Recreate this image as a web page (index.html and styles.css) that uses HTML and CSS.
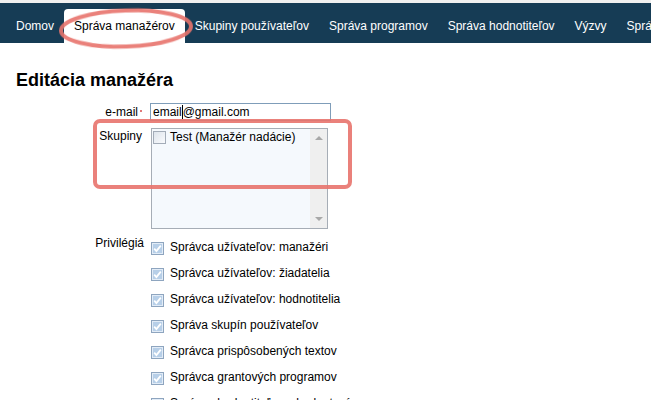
FILE: index.html
```html
<!DOCTYPE html>
<html lang="sk">
<head>
<meta charset="utf-8">
<title>Editácia manažéra</title>
<link rel="stylesheet" href="styles.css">
</head>
<body>
<div class="page">
  <div class="topline"></div>
  <nav class="nav">
    <a class="tab">Domov</a>
    <a class="tab active">Správa manažérov</a>
    <a class="tab">Skupiny používateľov</a>
    <a class="tab">Správa programov</a>
    <a class="tab">Správa hodnotiteľov</a>
    <a class="tab">Výzvy</a>
    <a class="tab">Správa žiadostí</a>
  </nav>

  <h1 class="title">Editácia manažéra</h1>

  <div class="form">
    <div class="label lbl-email">e-mail<span class="req"></span></div>
    <div class="field">
      <div class="input">email<span class="caret"></span>@gmail.com</div>
    </div>

    <div class="label lbl-groups">Skupiny</div>
    <div class="field">
      <div class="listbox">
        <div class="listbox-items">
          <div class="lb-item">
            <svg class="cb" viewBox="0 0 13 13"><defs><linearGradient id="ug" x1="0" y1="0" x2="1" y2="1"><stop offset="0" stop-color="#dce3eb"/><stop offset="1" stop-color="#fbfcfe"/></linearGradient></defs><rect x="0.5" y="0.5" width="12" height="12" fill="url(#ug)" stroke="#a3acb8"/></svg>
            <span>Test (Manažér nadácie)</span>
          </div>
        </div>
        <div class="scrollbar">
          <span class="arrow up"></span>
          <span class="arrow down"></span>
        </div>
      </div>
    </div>

    <div class="label lbl-priv">Privilégiá</div>
    <div class="field">
      <ul class="checks">
        <li><svg class="cb" viewBox="0 0 13 13"><rect x="0.5" y="0.5" width="12" height="12" fill="#e2ecf7" stroke="#8ea5bf"/><rect x="2" y="2" width="9" height="9" fill="#b7cfe8"/><path d="M3.2 6.6 L5.4 9 L9.8 3.6" fill="none" stroke="#fff" stroke-width="1.8"/></svg><span>Správca užívateľov: manažéri</span></li>
        <li><svg class="cb" viewBox="0 0 13 13"><rect x="0.5" y="0.5" width="12" height="12" fill="#e2ecf7" stroke="#8ea5bf"/><rect x="2" y="2" width="9" height="9" fill="#b7cfe8"/><path d="M3.2 6.6 L5.4 9 L9.8 3.6" fill="none" stroke="#fff" stroke-width="1.8"/></svg><span>Správca užívateľov: žiadatelia</span></li>
        <li><svg class="cb" viewBox="0 0 13 13"><rect x="0.5" y="0.5" width="12" height="12" fill="#e2ecf7" stroke="#8ea5bf"/><rect x="2" y="2" width="9" height="9" fill="#b7cfe8"/><path d="M3.2 6.6 L5.4 9 L9.8 3.6" fill="none" stroke="#fff" stroke-width="1.8"/></svg><span>Správca užívateľov: hodnotitelia</span></li>
        <li><svg class="cb" viewBox="0 0 13 13"><rect x="0.5" y="0.5" width="12" height="12" fill="#e2ecf7" stroke="#8ea5bf"/><rect x="2" y="2" width="9" height="9" fill="#b7cfe8"/><path d="M3.2 6.6 L5.4 9 L9.8 3.6" fill="none" stroke="#fff" stroke-width="1.8"/></svg><span>Správa skupín používateľov</span></li>
        <li><svg class="cb" viewBox="0 0 13 13"><rect x="0.5" y="0.5" width="12" height="12" fill="#e2ecf7" stroke="#8ea5bf"/><rect x="2" y="2" width="9" height="9" fill="#b7cfe8"/><path d="M3.2 6.6 L5.4 9 L9.8 3.6" fill="none" stroke="#fff" stroke-width="1.8"/></svg><span>Správca prispôsobených textov</span></li>
        <li><svg class="cb" viewBox="0 0 13 13"><rect x="0.5" y="0.5" width="12" height="12" fill="#e2ecf7" stroke="#8ea5bf"/><rect x="2" y="2" width="9" height="9" fill="#b7cfe8"/><path d="M3.2 6.6 L5.4 9 L9.8 3.6" fill="none" stroke="#fff" stroke-width="1.8"/></svg><span>Správca grantových programov</span></li>
        <li><svg class="cb" viewBox="0 0 13 13"><rect x="0.5" y="0.5" width="12" height="12" fill="#e2ecf7" stroke="#8ea5bf"/><rect x="2" y="2" width="9" height="9" fill="#b7cfe8"/><path d="M3.2 6.6 L5.4 9 L9.8 3.6" fill="none" stroke="#fff" stroke-width="1.8"/></svg><span>Správca hodnotiteľov a hodnotení</span></li>
      </ul>
    </div>
  </div>

  <svg class="annot" width="651" height="400" viewBox="0 0 651 400">
    <defs>
      <filter id="soft" x="-10%" y="-10%" width="120%" height="120%"><feGaussianBlur stdDeviation="0.7"/></filter>
    </defs>
    <ellipse cx="126" cy="28.5" rx="65" ry="18" fill="none" stroke="#e8746d" stroke-opacity="0.9" stroke-width="4" filter="url(#soft)" transform="rotate(-2 126 28.5)"/>
    <rect x="95" y="121" width="255" height="66" rx="5" ry="5" fill="none" stroke="#e8746d" stroke-opacity="0.9" stroke-width="4" filter="url(#soft)"/>
  </svg>
</div>
</body>
</html>
```

FILE: styles.css
```css
* { box-sizing: border-box; }

html, body {
  margin: 0;
  padding: 0;
  background: #ffffff;
}

body {
  font-family: "Liberation Sans", Arial, sans-serif;
  font-size: 12px;
  color: #000;
  overflow: hidden;
}

.page {
  position: relative;
  width: 651px;
  height: 400px;
  overflow: hidden;
}

.topline {
  height: 3px;
  background: #f0f0f0;
}

.nav {
  height: 40px;
  background: #163c55;
  display: flex;
  align-items: flex-end;
  padding-left: 6px;
  white-space: nowrap;
  overflow: hidden;
}

.tab {
  display: block;
  height: 34px;
  line-height: 34px;
  padding: 0 10px;
  color: #ffffff;
  text-decoration: none;
  flex: none;
}

.tab.active {
  background: #ffffff;
  color: #000;
  border-radius: 4px 4px 0 0;
}

.title {
  margin: 27px 0 0 16px;
  font-size: 18px;
  line-height: 21px;
  font-weight: bold;
}

.form {
  margin-top: 12px;
  display: grid;
  grid-template-columns: 144px auto;
  column-gap: 6px;
  row-gap: 7px;
  align-items: start;
}

.label {
  text-align: right;
  line-height: 14px;
}

.lbl-email { padding-top: 2px; padding-right: 2px; }
.lbl-groups { padding-top: 1px; padding-right: 2px; }
.lbl-priv { padding-top: 0; }

.req {
  display: inline-block;
  width: 2px;
  height: 2px;
  background: #e07878;
  margin-left: 2px;
  vertical-align: 4px;
}

.input {
  width: 181px;
  height: 18px;
  border: 1px solid #7f9db9;
  padding: 1px 2px;
  line-height: 14px;
  white-space: nowrap;
  background: #fff;
}

.caret {
  display: inline-block;
  width: 0;
  height: 14px;
  border-left: 1px solid #000;
  vertical-align: top;
}

.listbox {
  margin-left: 1px;
  width: 177px;
  height: 101px;
  border: 1px solid #a6adb6;
  background: #f5f9fd;
  display: flex;
}

.listbox-items {
  flex: 1;
  padding: 1px 0 0 1px;
}

.lb-item {
  display: flex;
  align-items: flex-start;
  gap: 4px;
  line-height: 14px;
}

.lb-item span { padding-top: 0; }

.scrollbar {
  width: 17px;
  background: #efefef;
  display: flex;
  flex-direction: column;
  justify-content: space-between;
  align-items: center;
  padding: 7px 0 7px;
}

.arrow {
  width: 0;
  height: 0;
  border-left: 4px solid transparent;
  border-right: 4px solid transparent;
}

.arrow.up { border-bottom: 4px solid #a8a8a8; }
.arrow.down { border-top: 4px solid #a8a8a8; }

.cb {
  width: 13px;
  height: 13px;
  flex: none;
  display: block;
}

.lb-item .cb { margin-top: 1px; }

.checks {
  list-style: none;
  margin: 0 0 0 1px;
  padding: 0;
}

.checks li {
  display: flex;
  align-items: flex-start;
  gap: 6px;
  height: 26px;
  line-height: 14px;
}

.checks li .cb { margin-top: 6px; }
.checks li span { padding-top: 4px; white-space: nowrap; }

.annot {
  position: absolute;
  left: 0;
  top: 0;
  pointer-events: none;
}
```
